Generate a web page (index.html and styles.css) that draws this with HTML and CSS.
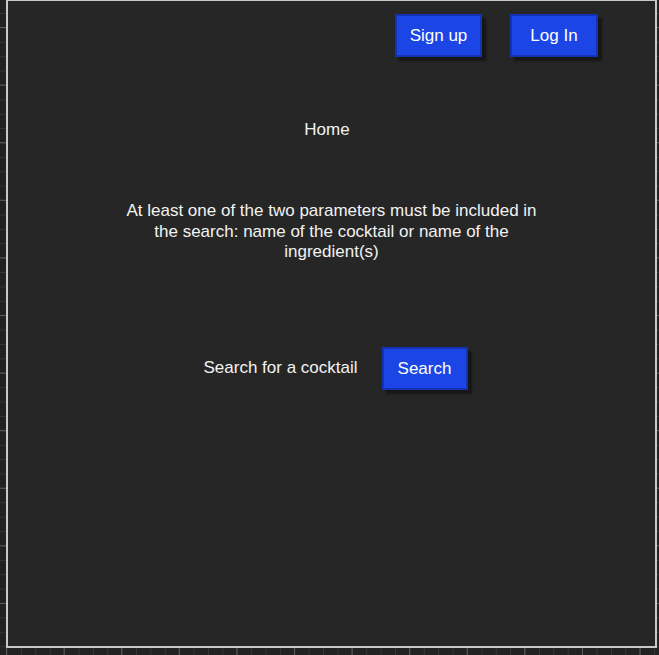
FILE: index.html
```html
<!DOCTYPE html>
<html lang="en">
<head>
<meta charset="utf-8">
<title>Home</title>
<link rel="stylesheet" href="styles.css">
</head>
<body>
<div class="page">
  <div class="top-row">
    <div class="ruler ruler-v"></div>
    <div class="frame">
      <header class="header">
        <button class="btn btn-signup">Sign up</button>
        <button class="btn btn-login">Log In</button>
      </header>
      <main class="main">
        <h1 class="title">Home</h1>
        <p class="note">At least one of the two parameters must be included in the search: name of the cocktail or name of the ingredient(s)</p>
        <div class="search-row">
          <span class="search-label">Search for a cocktail</span>
          <button class="btn btn-search">Search</button>
        </div>
      </main>
    </div>
    <div class="ruler ruler-v ruler-right"></div>
  </div>
  <div class="ruler ruler-h"></div>
</div>
</body>
</html>
```

FILE: styles.css
```css
* { box-sizing: border-box; }

html, body {
  margin: 0;
  padding: 0;
  background: #222222;
  font-family: "Liberation Sans", Arial, sans-serif;
  color: #f2f2f2;
}

.page {
  width: 659px;
  height: 655px;
  display: flex;
  flex-direction: column;
  overflow: hidden;
}

.top-row {
  display: flex;
  height: 648px;
}

.ruler-v {
  width: 6px;
  height: 100%;
  background-color: #222222;
  background-image:
    linear-gradient(to bottom, #5c5c5c 1px, transparent 1px),
    linear-gradient(to bottom, #363636 1px, transparent 1px);
  background-size: 100% 57.6px, 100% 14.4px;
  background-position: 0 27px, 0 13px;
}

.ruler-right {
  width: 2px;
  flex: 0 0 2px;
}

.ruler-h {
  height: 7px;
  width: 100%;
  background-color: #222222;
  background-image:
    linear-gradient(to right, #5c5c5c 1px, transparent 1px),
    linear-gradient(to right, #363636 1px, transparent 1px);
  background-size: 57.6px 100%, 14.4px 100%;
  background-position: 6px 0, 6.5px 0;
}

.frame {
  width: 651px;
  flex: 0 0 651px;
  height: 648px;
  background: #262626;
  border: 2px solid #c9c9c9;
  border-top-width: 1px;
  padding-top: 13px;
}

.header {
  display: flex;
  justify-content: flex-end;
  gap: 28px;
  padding-right: 57px;
}

.btn {
  font-family: "Liberation Sans", Arial, sans-serif;
  font-size: 17px;
  line-height: 20px;
  color: #ffffff;
  background: #1c45e6;
  border: 2px solid #1332b4;
  height: 43px;
  padding: 1px 0 0;
  text-align: center;
  box-shadow: 4px 4px 2px #161616;
  cursor: pointer;
}

.btn-signup { width: 87px; }
.btn-login { width: 88px; }
.btn-search { width: 86px; }

.main {
  display: flex;
  flex-direction: column;
  align-items: center;
}

.title {
  margin: 63px 0 0;
  padding-right: 9px;
  font-size: 17px;
  font-weight: normal;
  line-height: 20.4px;
}

.note {
  margin: 61px 0 0;
  width: 430px;
  font-size: 17px;
  line-height: 20.5px;
  text-align: center;
}

.search-row {
  margin-top: 84px;
  display: flex;
  align-items: center;
  gap: 24px;
  padding-left: 8px;
}

.search-label {
  font-size: 17px;
  line-height: 20px;
}
```
